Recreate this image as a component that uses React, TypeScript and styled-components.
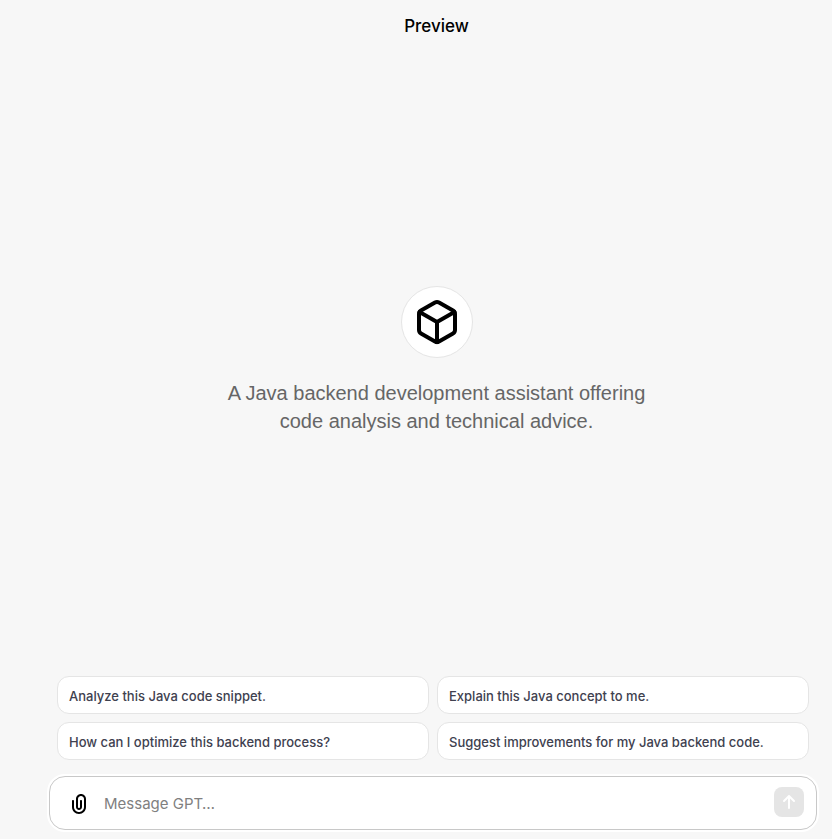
import React from "react";
import styled, { createGlobalStyle } from "styled-components";

const GlobalStyle = createGlobalStyle`
  *, *::before, *::after { box-sizing: border-box; }
  body {
    margin: 0;
    background: #f7f7f7;
    color: #000;
    font-family: Inter, "Liberation Sans", sans-serif;
  }
  button, input { font: inherit; }
`;

const Panel = styled.main`
  display: flex;
  flex-direction: column;
  min-height: 100vh;
  padding-left: 41px;
`;

const Header = styled.header`
  display: flex;
  justify-content: center;
  padding-top: 14px;
`;

const Title = styled.h1`
  margin: 0;
  font-size: 17px;
  line-height: 24px;
  font-weight: 500;
`;

const Hero = styled.section`
  flex: 1;
  display: flex;
  flex-direction: column;
  align-items: center;
  justify-content: center;
  gap: 21px;
  padding: 6px 16px 0;
`;

const Avatar = styled.div`
  display: flex;
  align-items: center;
  justify-content: center;
  width: 72px;
  height: 72px;
  border: 1px solid #e5e5e5;
  border-radius: 50%;
  background: #fff;
`;

const Description = styled.p`
  margin: 0;
  max-width: 448px;
  color: #666;
  font-family: "Liberation Sans", Arial, sans-serif;
  font-size: 20px;
  line-height: 28px;
  text-align: center;
`;

const Footer = styled.footer`
  display: flex;
  flex-direction: column;
  gap: 16px;
  padding: 0 15px 9px 8px;
`;

const Starters = styled.div`
  display: grid;
  grid-template-columns: 1fr 1fr;
  gap: 8px;
  padding: 0 8px;
`;

const Starter = styled.button`
  height: 38px;
  padding: 2px 11px 0;
  border: 1px solid #e5e5e5;
  border-radius: 12px;
  background: #fff;
  color: #40414f;
  font-size: 13px;
  line-height: 20px;
  font-weight: 500;
  text-align: left;
  white-space: nowrap;
  cursor: pointer;
`;

const Composer = styled.form`
  display: flex;
  align-items: center;
  height: 54px;
  padding: 0 12px 0 17px;
  border: 1px solid #c8c8c8;
  border-radius: 16px;
  background: #fff;
  box-shadow: 0 0 0 2px #fff;
`;

const AttachButton = styled.button`
  display: flex;
  padding: 2px 0 0;
  border: 0;
  background: none;
  color: #000;
  cursor: pointer;
`;

const MessageInput = styled.input`
  flex: 1;
  min-width: 0;
  padding: 2px 13px 0;
  border: 0;
  outline: 0;
  background: transparent;
  color: #000;
  font-size: 15px;
  line-height: 24px;

  &::placeholder {
    color: #808080;
    opacity: 1;
  }
`;

const SendButton = styled.button`
  display: flex;
  align-items: center;
  justify-content: center;
  width: 30px;
  height: 30px;
  margin-bottom: 3px;
  padding: 0;
  border: 0;
  border-radius: 8px;
  background: #e5e5e5;
  color: #fff;
`;

const CubeIcon = () => (
  <svg width="48" height="48" viewBox="0 0 24 24" fill="none" stroke="currentColor" strokeWidth="2" strokeLinecap="round" strokeLinejoin="round" aria-hidden="true">
    <path d="M21 16V8a2 2 0 0 0-1-1.73l-7-4a2 2 0 0 0-2 0l-7 4A2 2 0 0 0 3 8v8a2 2 0 0 0 1 1.73l7 4a2 2 0 0 0 2 0l7-4A2 2 0 0 0 21 16z" />
    <polyline points="3.27 6.96 12 12.01 20.73 6.96" />
    <line x1="12" y1="22.08" x2="12" y2="12" />
  </svg>
);

const PaperclipIcon = () => (
  <svg width="24" height="24" viewBox="0 0 24 24" fill="none" aria-hidden="true">
    <path
      fillRule="evenodd"
      clipRule="evenodd"
      fill="currentColor"
      d="M9 7C9 4.23858 11.2386 2 14 2C16.7614 2 19 4.23858 19 7V15C19 18.866 15.866 22 12 22C8.13401 22 5 18.866 5 15V9C5 8.44772 5.44772 8 6 8C6.55228 8 7 8.44772 7 9V15C7 17.7614 9.23858 20 12 20C14.7614 20 17 17.7614 17 15V7C17 5.34315 15.6569 4 14 4C12.3431 4 11 5.34315 11 7V15C11 15.5523 11.4477 16 12 16C12.5523 16 13 15.5523 13 15V9C13 8.44772 13.4477 8 14 8C14.5523 8 15 8.44772 15 9V15C15 16.6569 13.6569 18 12 18C10.3431 18 9 16.6569 9 15V7Z"
    />
  </svg>
);

const ArrowUpIcon = () => (
  <svg width="24" height="24" viewBox="0 0 24 24" fill="none" aria-hidden="true">
    <path d="M7 11L12 6L17 11M12 18V7" stroke="currentColor" strokeWidth="2" strokeLinecap="round" strokeLinejoin="round" />
  </svg>
);

const starters = [
  "Analyze this Java code snippet.",
  "Explain this Java concept to me.",
  "How can I optimize this backend process?",
  "Suggest improvements for my Java backend code.",
];

export default function App() {
  return (
    <>
      <GlobalStyle />
      <Panel>
        <Header>
          <Title>Preview</Title>
        </Header>
        <Hero>
          <Avatar>
            <CubeIcon />
          </Avatar>
          <Description>
            A Java backend development assistant offering code analysis and technical advice.
          </Description>
        </Hero>
        <Footer>
          <Starters>
            {starters.map((text) => (
              <Starter key={text} type="button">
                {text}
              </Starter>
            ))}
          </Starters>
          <Composer onSubmit={(event: React.FormEvent) => event.preventDefault()}>
            <AttachButton type="button" aria-label="Attach files">
              <PaperclipIcon />
            </AttachButton>
            <MessageInput type="text" aria-label="Message GPT" placeholder="Message GPT…" />
            <SendButton type="submit" aria-label="Send message" disabled>
              <ArrowUpIcon />
            </SendButton>
          </Composer>
        </Footer>
      </Panel>
    </>
  );
}
